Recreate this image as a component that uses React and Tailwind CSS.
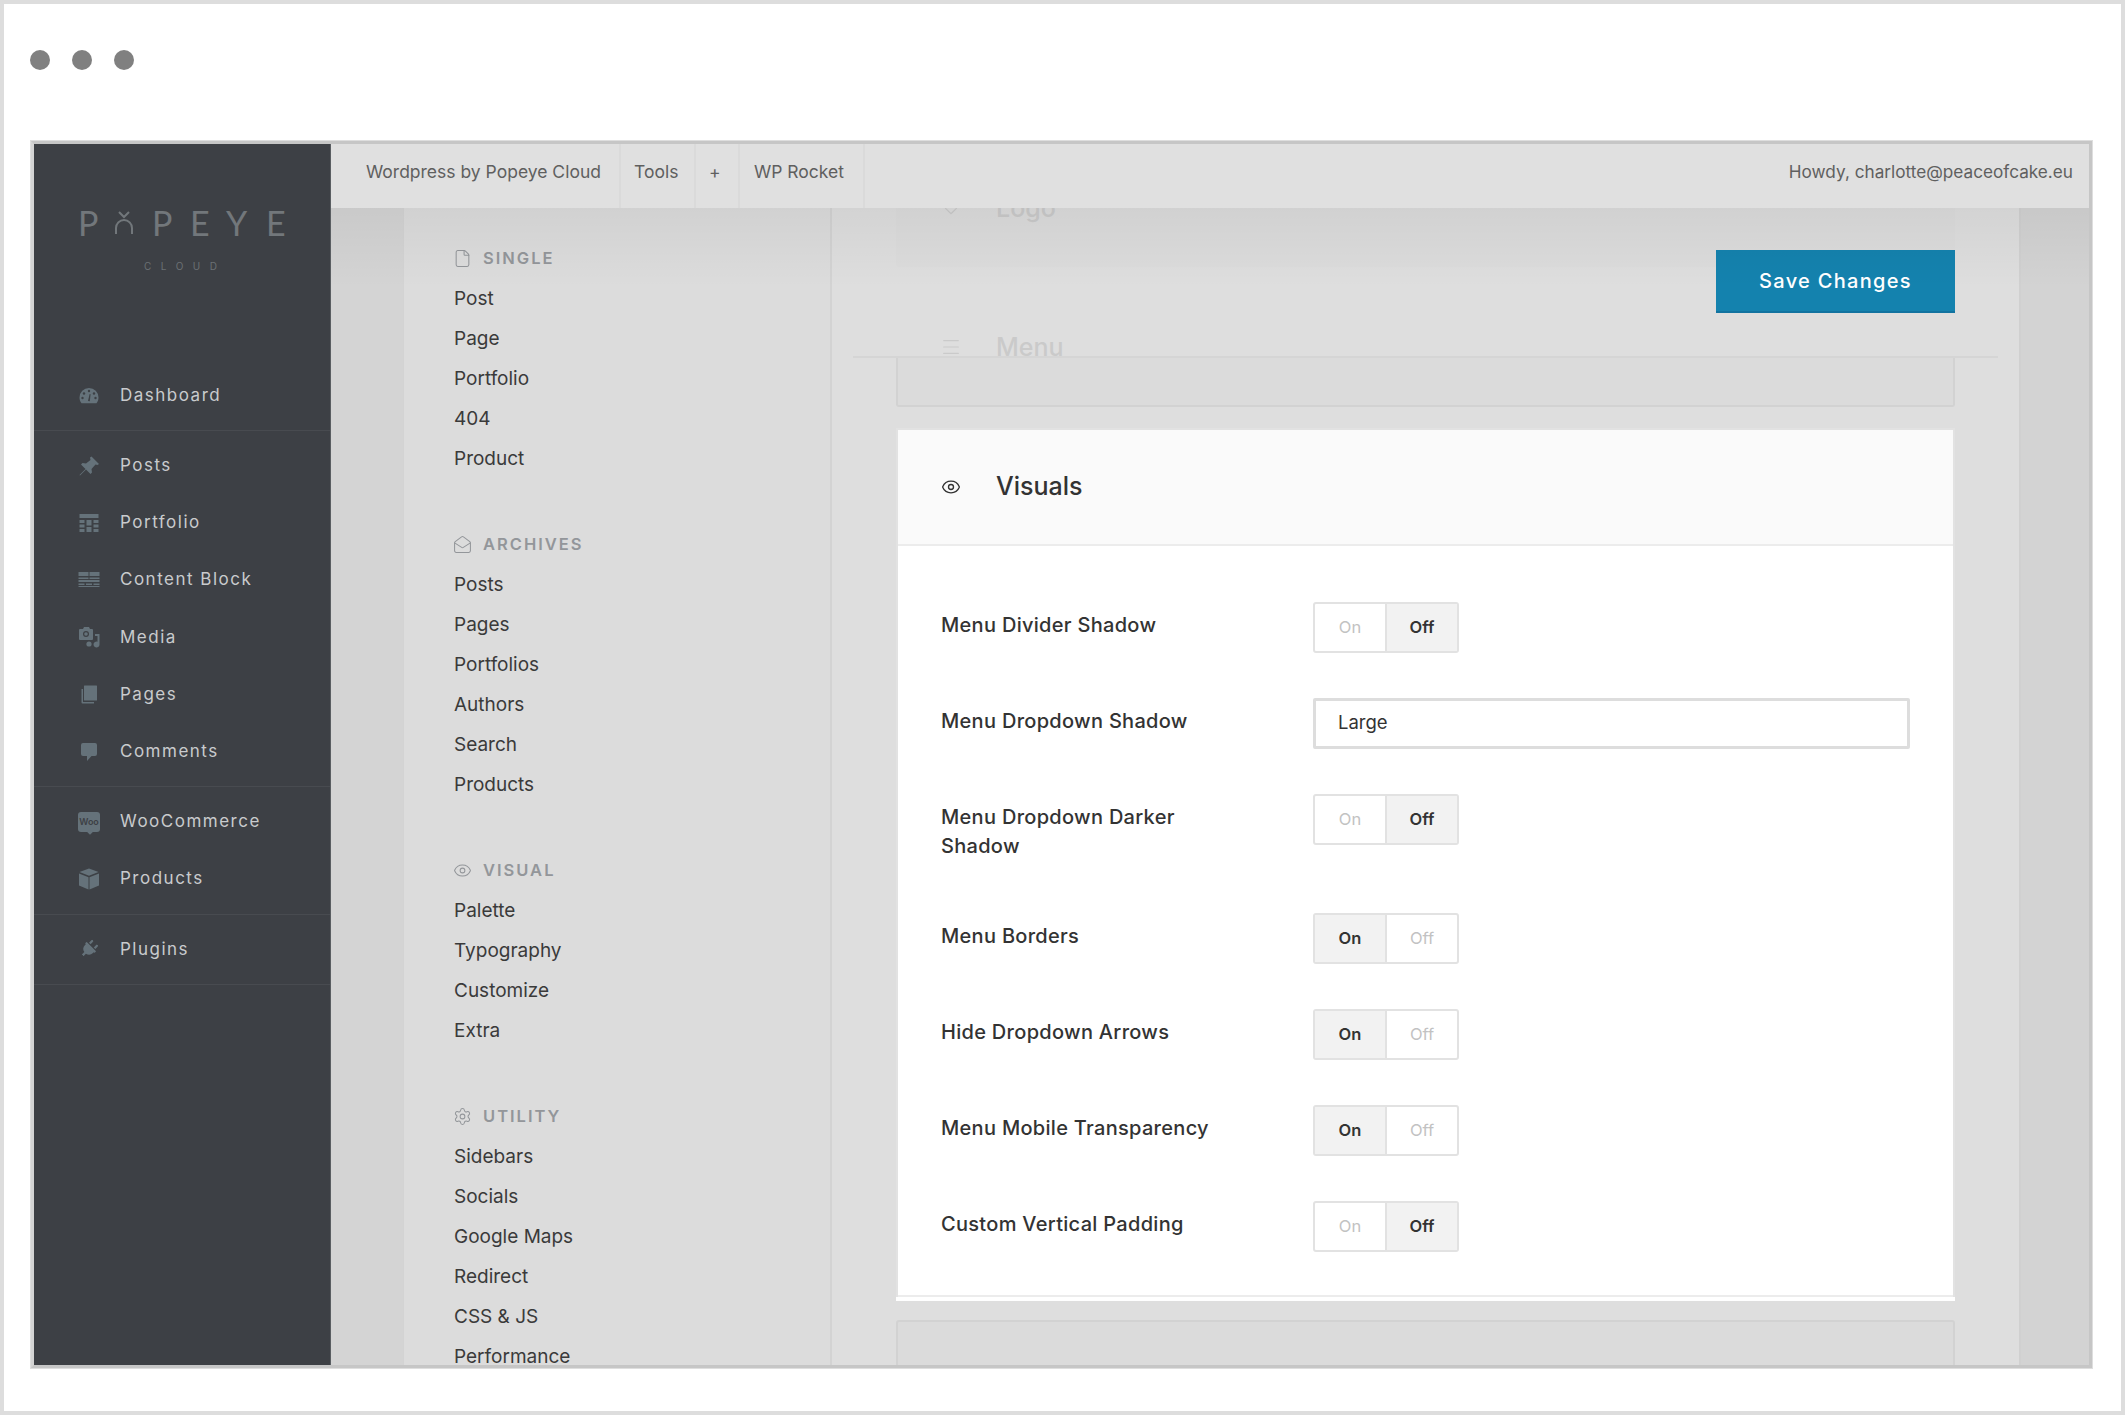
import React from 'react';
import { File, MailOpen, Eye, Settings, Menu as MenuIcon, ChevronDown } from 'lucide-react';
import { FaPlug } from 'react-icons/fa';

const GaugeIcon = () => (
    <svg viewBox="0 0 22 22" className="w-[22px] h-[22px] fill-current">
        <path d="M11 3a9.5 9.5 0 0 0-9.5 9.5c0 2.3.8 4.3 2 5.8h15c1.2-1.5 2-3.5 2-5.8A9.5 9.5 0 0 0 11 3z" />
        <circle cx="11" cy="6" r="1.2" fill="#3d4045" />
        <circle cx="6" cy="8.5" r="1.2" fill="#3d4045" />
        <circle cx="16" cy="8.5" r="1.2" fill="#3d4045" />
        <circle cx="4.5" cy="13" r="1.2" fill="#3d4045" />
        <circle cx="17.5" cy="13" r="1.2" fill="#3d4045" />
        <path d="M10 16l1.6-7 1 .3-.8 7z" fill="#3d4045" />
    </svg>
);

const PinIcon = () => (
    <svg viewBox="0 0 22 22" className="w-[22px] h-[22px] fill-current">
        <path d="M13.500 1.500L21 9l-1.500 1-2-.5-4 4.500.5 3.500-1.500 1.500L8 14.500 2 20.500l-.5-.5 6-6-4.500-4.500L4.500 8l3.500.5 4.500-3.500-.5-2.500z" />
    </svg>
);

const PortfolioIcon = () => (
    <svg viewBox="0 0 22 22" className="w-[22px] h-[22px] fill-current">
        <rect x="1.5" y="2" width="19" height="4" />
        <rect x="1.5" y="8" width="5" height="3" />
        <rect x="8.5" y="8" width="5" height="5.5" />
        <rect x="15.5" y="8" width="5" height="3" />
        <rect x="1.5" y="12.5" width="5" height="3" />
        <rect x="15.5" y="12.5" width="5" height="3" />
        <rect x="1.5" y="17" width="5" height="3" />
        <rect x="8.5" y="15" width="5" height="5" />
        <rect x="15.5" y="17" width="5" height="3" />
    </svg>
);

const BlockIcon = () => (
    <svg viewBox="0 0 22 22" className="w-[22px] h-[22px] fill-current">
        <rect x="0.5" y="3" width="10" height="4" />
        <rect x="11.5" y="3" width="10" height="4" />
        <rect x="0.5" y="8.5" width="10" height="1.5" />
        <rect x="11.5" y="8.5" width="10" height="1.5" />
        <rect x="0.5" y="11" width="21" height="2" />
        <rect x="0.5" y="14.5" width="6" height="1.5" />
        <rect x="8" y="14.5" width="6" height="1.5" />
        <rect x="15.5" y="14.5" width="6" height="1.5" />
        <rect x="0.5" y="17" width="21" height="1" />
    </svg>
);

const MediaIcon = () => (
    <svg viewBox="0 0 22 22" className="w-[22px] h-[22px] fill-current">
        <path d="M2 3h3l1-2h5l1 2h2a1 1 0 0 1 1 1v9a1 1 0 0 1-1 1H2a1 1 0 0 1-1-1V4a1 1 0 0 1 1-1z" />
        <circle cx="8" cy="8" r="3" fill="#3d4045" />
        <circle cx="8" cy="8" r="1.8" />
        <path d="M17 8h4.500v10.500a3 3 0 1 1-2-2.800V10H17z" />
        <circle cx="11" cy="18" r="2.600" />
    </svg>
);

const PagesIcon = () => (
    <svg viewBox="0 0 22 22" className="w-[22px] h-[22px] fill-current">
        <rect x="6" y="1.500" width="13" height="15" rx="0.5" />
        <path d="M3.500 5H5v13h11v1.500H4.500a1 1 0 0 1-1-1z" />
    </svg>
);

const CommentIcon = () => (
    <svg viewBox="0 0 22 22" className="w-[22px] h-[22px] fill-current">
        <path d="M5 2h12a2 2 0 0 1 2 2v9a2 2 0 0 1-2 2h-3.500L9 20v-5H5a2 2 0 0 1-2-2V4a2 2 0 0 1 2-2z" />
    </svg>
);

const BoxIcon = () => (
    <svg viewBox="0 0 22 22" className="w-[22px] h-[22px] fill-current">
        <path d="M11 0.500L20.500 4 11 7.800 1.500 4z" />
        <path d="M1 5.500l9.500 3.800v12.200L1 17.500z" />
        <path d="M21 5.500l-9.500 3.800v12.200l9.500-4z" />
    </svg>
);

const NavIcons = {
    dashboard: <GaugeIcon />,
    posts: <PinIcon />,
    portfolio: <PortfolioIcon />,
    block: <BlockIcon />,
    media: <MediaIcon />,
    pages: <PagesIcon />,
    comments: <CommentIcon />,
    woo: (
        <div className="relative w-[22px] h-[20px] rounded-[3px] bg-[#65727a] text-[#3d4045] text-[9px] leading-[20px] font-semibold text-center">
            Woo
            <div className="absolute left-[10px] -bottom-[2px] w-[4px] h-[4px] rotate-45 bg-[#65727a]"></div>
        </div>
    ),
    products: <BoxIcon />,
    plugins: <FaPlug className="w-[18px] h-[18px] rotate-45" />,
};

const navGroups = [
    [{ label: 'Dashboard', icon: 'dashboard' }],
    [
        { label: 'Posts', icon: 'posts' },
        { label: 'Portfolio', icon: 'portfolio' },
        { label: 'Content Block', icon: 'block' },
        { label: 'Media', icon: 'media' },
        { label: 'Pages', icon: 'pages' },
        { label: 'Comments', icon: 'comments' },
    ],
    [
        { label: 'WooCommerce', icon: 'woo' },
        { label: 'Products', icon: 'products' },
    ],
    [{ label: 'Plugins', icon: 'plugins' }],
];

const menuSections = [
    { title: 'Single', Icon: File, items: ['Post', 'Page', 'Portfolio', '404', 'Product'] },
    { title: 'Archives', Icon: MailOpen, items: ['Posts', 'Pages', 'Portfolios', 'Authors', 'Search', 'Products'] },
    { title: 'Visual', Icon: Eye, items: ['Palette', 'Typography', 'Customize', 'Extra'] },
    { title: 'Utility', Icon: Settings, items: ['Sidebars', 'Socials', 'Google Maps', 'Redirect', 'CSS & JS', 'Performance'] },
];

const settings = [
    { label: 'Menu Divider Shadow', type: 'toggle', on: false },
    { label: 'Menu Dropdown Shadow', type: 'select', value: 'Large' },
    { label: 'Menu Dropdown Darker Shadow', type: 'toggle', on: false },
    { label: 'Menu Borders', type: 'toggle', on: true },
    { label: 'Hide Dropdown Arrows', type: 'toggle', on: true },
    { label: 'Menu Mobile Transparency', type: 'toggle', on: true },
    { label: 'Custom Vertical Padding', type: 'toggle', on: false },
];

const Toggle = ({ on }) => (
    <div className="w-[146px] h-[51px] flex border-2 border-[#e2e2e2] rounded-[3px] bg-white text-[16.5px] leading-[47px] text-center font-semibold">
        <div className={`w-[72px] border-r-2 border-[#e2e2e2] ${on ? 'bg-[#f2f2f2] text-[#333]' : 'text-[#c2c2c2] font-normal'}`}>On</div>
        <div className={`flex-1 ${on ? 'text-[#c2c2c2] font-normal' : 'bg-[#f2f2f2] text-[#333]'}`}>Off</div>
    </div>
);

const App = () => {
    return (
        <div className="w-[2125px] h-[1415px] overflow-hidden border-4 border-[#dddddd] bg-white font-['Inter',sans-serif]">
            <div className="h-[137px] flex gap-[22px] pl-[26px] pt-[46px]">
                <div className="w-5 h-5 rounded-full bg-[#808080]"></div>
                <div className="w-5 h-5 rounded-full bg-[#808080]"></div>
                <div className="w-5 h-5 rounded-full bg-[#808080]"></div>
            </div>

            <div className="ml-[27px] w-[2061px] h-[1227px] flex border-[3px] border-[#c6c6c6] border-l-[#d4d4d4] outline-1 outline-[#dedede]">
                <aside className="w-[297px] shrink-0 bg-[#3d4045] border-r border-[#5a5e62] flex flex-col">
                    <div className="h-[217px] pt-[62px] relative">
                        <div className="flex pl-[44px] text-[34px] leading-[34px] font-['Lato',sans-serif] font-normal text-[#72777b]">
                            <span className="w-[36px]">P</span>
                            <svg viewBox="0 0 20 24" className="w-[20px] h-[26px] mt-[4px] mr-[18px] fill-none stroke-current">
                                <path d="M5 1l5 5 5-5" strokeWidth="2" />
                                <path d="M2 23v-6a8 8 0 0 1 16 0v6" strokeWidth="2" />
                            </svg>
                            <span className="w-[38px]">P</span>
                            <span className="w-[36px]">E</span>
                            <span className="w-[40px]">Y</span>
                            <span>E</span>
                        </div>
                        <div className="mt-[19px] pl-[110px] text-[10px] leading-[14px] tracking-[9.5px] text-[#6b7074]">CLOUD</div>
                    </div>
                    {navGroups.map((group, i) => (
                        <div key={i} className="py-[6px] border-b border-[#484b50]">
                            {group.map(item => (
                                <div key={item.label} className="h-[57.2px] pl-[44px] flex items-center gap-[20px]">
                                    <div className="w-[22px] h-[22px] flex items-center justify-center text-[#65727a]">{NavIcons[item.icon]}</div>
                                    <span className="text-[17px] tracking-[1.5px] text-[#c9cbcd]">{item.label}</span>
                                </div>
                            ))}
                        </div>
                    ))}
                </aside>

                <div className="flex-1 min-w-0 flex flex-col">
                    <header className="h-[64px] shrink-0 flex items-stretch bg-[#e0e0e0] text-[17.5px] leading-[56px] text-[#5f5f5f] relative z-10">
                        <div className="w-[290px] pl-[35px] border-r-2 border-[#dadada]">Wordpress by Popeye Cloud</div>
                        <div className="w-[75px] pl-[13px] border-r-2 border-[#dadada]">Tools</div>
                        <div className="w-[44px] pl-[13px] border-r-2 border-[#dadada]">+</div>
                        <div className="w-[125px] pl-[14px] border-r-2 border-[#dadada]">WP Rocket</div>
                        <div className="ml-auto pr-[16px] text-[17.2px]">Howdy, charlotte@peaceofcake.eu</div>
                    </header>

                    <div className="flex-1 min-h-0 flex relative overflow-hidden">
                        <div className="w-[72px] shrink-0 bg-[#d4d4d4]"></div>

                        <nav className="w-[429px] shrink-0 pt-[31px] pl-[50px] bg-[#dcdcdc] border-l border-r-2 border-[#d3d3d3] overflow-hidden">
                            {menuSections.map(({ title, Icon, items }) => (
                                <section key={title} className="mb-[46px]">
                                    <div className="h-[38px] mb-[2px] flex items-center gap-[11px] -ml-[1px] text-[#93969a]">
                                        <Icon className="w-[19px] h-[19px]" strokeWidth={1.3} />
                                        <span className="uppercase text-[16.5px] font-semibold tracking-[2px]">{title}</span>
                                    </div>
                                    {items.map(item => (
                                        <div key={item} className="h-[40px] flex items-center text-[19px] text-[#3a3a3a]">{item}</div>
                                    ))}
                                </section>
                            ))}
                        </nav>

                        <main className="w-[1187px] shrink-0 px-[64px] bg-[#dedede] relative">
                            <div className="h-[148px] overflow-hidden">
                                <div className="-mt-[60px] h-[119px] pt-[46px] pl-[44px] flex items-start gap-[34px] bg-[#dcdcdc] text-[#cacaca] rounded-[3px]">
                                    <ChevronDown className="w-[22px] h-[28px] mt-[3px]" strokeWidth={1.2} />
                                    <span className="text-[25px] leading-[28px] font-medium">Logo</span>
                                </div>
                                <div className="mt-[23px] h-[80px] pt-[43px] pl-[44px] flex items-start gap-[34px] text-[#cacaca]">
                                    <MenuIcon className="w-[22px] h-[28px]" strokeWidth={1.2} />
                                    <span className="text-[25px] leading-[28px] font-medium">Menu</span>
                                </div>
                            </div>

                            <div className="absolute left-[21px] right-[21px] top-[148px] h-[2px] bg-[#d5d5d5]"></div>
                            <button className="absolute right-[64px] top-[42px] w-[239px] h-[63px] bg-[#1482ae] border-b-2 border-[#1273a0] text-white text-[20px] font-medium tracking-[1.3px]">Save Changes</button>

                            <div className="h-[51px] bg-[#dbdbdb] border-2 border-t-0 border-[#d2d2d2] rounded-b-[3px]"></div>

                            <section className="mt-[21px] bg-white border-x-2 border-t-2 border-[#e2e2e2]">
                                <div className="h-[116px] pl-[43px] pr-[42px] flex items-center gap-[35px] bg-[#fafafa] border-b-2 border-[#ececec]">
                                    <Eye className="w-[20px] h-[20px] text-[#333]" strokeWidth={1.6} />
                                    <h2 className="text-[25px] font-medium text-[#333]">Visuals</h2>
                                </div>
                                <div className="h-[751px] pl-[43px] pr-[43px] pt-[56px] border-b-2 border-[#ececec]">
                                    {settings.map(row => (
                                        <div key={row.label} className="flex items-start mb-[45px]">
                                            <div className="w-[372px] pr-[90px] pt-[9px] pb-[7px] text-[20px] leading-[29px] tracking-[0.3px] font-medium text-[#333]">{row.label}</div>
                                            {row.type === 'toggle' ? (
                                                <Toggle on={row.on} />
                                            ) : (
                                                <div className="flex-1 h-[51px] border-[3px] border-[#dddddd] rounded-[2px] bg-white pl-[22px] text-[18.5px] leading-[43px] text-[#333]">{row.value}</div>
                                            )}
                                        </div>
                                    ))}
                                </div>
                            </section>
                            <div className="h-[4px] bg-white"></div>
                            <div className="mt-[19px] h-[60px] bg-[#dbdbdb] border-2 border-[#d2d2d2] rounded-t-[3px]"></div>
                        </main>

                        <div className="flex-1 bg-[#d3d3d3] border-l-2 border-[#d0d0d0]"></div>

                        <div className="absolute inset-x-0 top-0 h-[80px] bg-gradient-to-b from-black/5 to-transparent pointer-events-none"></div>
                    </div>
                </div>
            </div>
        </div>
    );
};

export default App;
